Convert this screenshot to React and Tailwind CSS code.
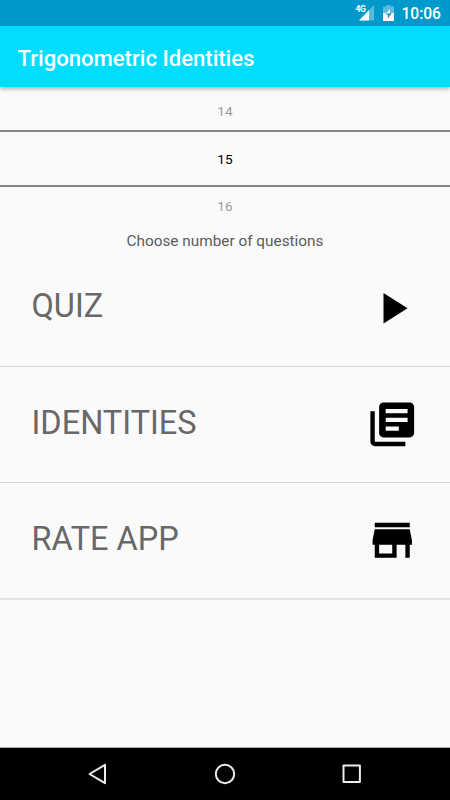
import { MdPlayArrow, MdLibraryBooks } from "react-icons/md";

const StoreIcon = ({ className }) => (
  <svg className={className} viewBox="0 0 24 24" fill="currentColor">
    <path d="M20 4H4v2h16V4zm1 10v-2l-1-5H4l-1 5v2h1v6h10v-6h4v6h2v-6h1zm-9 4H6v-4h6v4z" />
  </svg>
);

const menuItems = [
  { label: "QUIZ", icon: MdPlayArrow, style: "h-[117px] border-b border-[#d6d6d6]" },
  { label: "IDENTITIES", icon: MdLibraryBooks, style: "h-[116px] border-b border-[#d6d6d6]" },
  { label: "RATE APP", icon: StoreIcon, style: "h-[117px] border-b-2 border-[#e3e3e3]" },
];

const StatusBar = () => (
  <div className="flex h-[26px] shrink-0 items-center justify-end bg-[#0099cc] pr-[9px] text-white">
    <div className="relative mr-[9px] h-[16px] w-[19px]">
      <svg className="h-full w-full" viewBox="0 0 19 16">
        <path d="M19 0v15.5H4z" fill="#fff" fillOpacity="0.35" />
        <path d="M14 5.2v10.3H4z" fill="#fff" />
      </svg>
      <span className="absolute left-0 top-0 bg-[#0099cc] text-[8.5px] font-bold leading-[8px] tracking-[-0.4px]">4G</span>
    </div>
    <svg className="mr-[7px] h-[16px] w-[11px]" viewBox="0 0 11 16">
      <path d="M3.5 0h4v1.6H11V8H0V1.6h3.5z" fill="#fff" fillOpacity="0.35" />
      <path d="M0 8h11v8H0z" fill="#fff" />
      <path d="M6.8 8h2L4.8 13.5V9.6H2.2L3.4 8z" fill="#0099cc" />
      <path d="M7 4v4.5H3z" fill="#fff" />
    </svg>
    <span className="pt-[2px] text-[15.6px] font-medium leading-[26px]">10:06</span>
  </div>
);

const NumberPicker = () => (
  <div className="flex flex-col text-center text-[13.6px]">
    <div className="h-[43px] pt-[15px] leading-[18px] text-[#9b9b9b]">14</div>
    <div className="h-[57px] border-y-2 border-[#858585] pt-[17px] leading-[20px] text-black">15</div>
    <div className="h-[41px] pt-[10px] leading-[18px] text-[#9b9b9b]">16</div>
  </div>
);

const MenuRow = ({ label, icon: Icon, style }) => (
  <div className={`flex items-center justify-between pl-[31.5px] pr-[31.5px] ${style}`}>
    <span className="pb-[4px] text-[32.5px] leading-[38px] text-[#686868]">{label}</span>
    <Icon className="h-[52.5px] w-[52.5px] text-black" />
  </div>
);

const NavBar = () => (
  <div className="flex h-[53px] shrink-0 items-center justify-center gap-[103px] border-t border-[#aaaaaa] bg-black text-[#ededed]">
    <svg className="h-6 w-6" viewBox="0 0 24 24" fill="none" stroke="currentColor" strokeWidth="2" strokeLinejoin="round">
      <path d="M19 2.8v18.4L3.5 12z" />
    </svg>
    <svg className="h-6 w-6" viewBox="0 0 24 24" fill="none" stroke="currentColor" strokeWidth="2">
      <circle cx="12" cy="12" r="9.2" />
    </svg>
    <svg className="h-6 w-6" viewBox="0 0 24 24" fill="none" stroke="currentColor" strokeWidth="2" strokeLinejoin="round">
      <path d="M3.5 3.5h16.4v16.4H3.5z" />
    </svg>
  </div>
);

const App = () => {
  return (
    <div className="flex h-[800px] w-[450px] flex-col overflow-hidden bg-[#fafafa] font-[Roboto,sans-serif]">
      <StatusBar />

      <header className="z-10 flex h-[61px] shrink-0 items-center bg-[#00ddff] pl-[17.5px] pt-[2px] shadow-[0_2px_4px_rgba(0,0,0,0.3)]">
        <h1 className="text-[22.1px] font-medium leading-[28px] text-white">Trigonometric Identities</h1>
      </header>

      <main className="flex-1">
        <NumberPicker />
        <p className="h-[22px] text-center text-[15.35px] leading-[26px] text-[#5c5c5c]">Choose number of questions</p>
        {menuItems.map((item) => (
          <MenuRow key={item.label} {...item} />
        ))}
      </main>

      <NavBar />
    </div>
  );
};

export default App;
